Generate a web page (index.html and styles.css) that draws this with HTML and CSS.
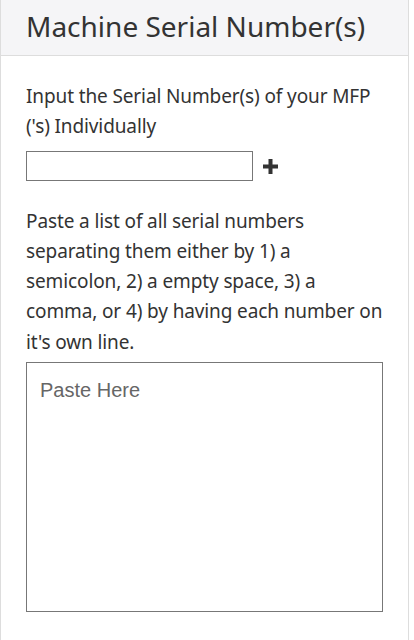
FILE: index.html
```html
<!DOCTYPE html>
<html lang="en">
<head>
  <meta charset="UTF-8">
  <title>Machine Serial Numbers</title>
  <link rel="stylesheet" href="styles.css">
</head>
<body>

<div class="panel">
  <div class="panel-heading">Machine Serial Number(s)</div>
  <div class="panel-body">
    <p class="hint">Input the Serial Number(s) of your MFP ('s) Individually</p>
    <div class="serial-row">
      <input type="text" class="serial-input">
      <button class="add-btn" title="Add">
        <svg width="15" height="15" viewBox="0 0 15 15"><path d="M5.5 0h4v5.5H15v4H9.5V15h-4V9.5H0v-4h5.5z" fill="#333"/></svg>
      </button>
    </div>
    <p class="hint paste-hint">Paste a list of all serial numbers separating them either by 1) a semicolon, 2) a empty space, 3) a comma, or 4) by having each number on it's own line.</p>
    <textarea class="paste-box" placeholder="Paste Here"></textarea>
  </div>
</div>

</body>
</html>
```

FILE: styles.css
```css
body {
  margin: 0;
  font-family: "Noto Sans", "Open Sans", sans-serif;
  color: #333;
  background: #fff;
}

.panel {
  width: 409px;
  height: 640px;
  box-sizing: border-box;
  border-left: 1px solid #ddd;
  border-right: 1px solid #ddd;
}

.panel-heading {
  height: 56px;
  box-sizing: border-box;
  padding: 0 25px;
  background-color: #f5f5f7;
  border-bottom: 1px solid #ddd;
  font-size: 28px;
  line-height: 52px;
  color: #333;
}

.panel-body {
  padding: 25px 25px 0;
}

.hint {
  margin: 0;
  font-size: 19px;
  letter-spacing: -0.12px;
  line-height: 30.3px;
}

.serial-row {
  display: flex;
  align-items: center;
  margin-top: 9px;
}

.serial-input {
  width: 227px;
  height: 30px;
  box-sizing: border-box;
  border: 1px solid #777;
  padding: 2px 6px;
  margin: 0;
  font-size: 16px;
}

.add-btn {
  border: none;
  background: none;
  padding: 0;
  margin-left: 10px;
  margin-top: 2px;
  cursor: pointer;
  display: flex;
}

.paste-hint {
  margin-top: 25px;
}

.paste-box {
  display: block;
  width: 357px;
  height: 250px;
  box-sizing: border-box;
  margin-top: 5px;
  border: 1px solid #777;
  padding: 16px 13px;
  font-family: "Liberation Sans", Arial, sans-serif;
  font-size: 20px;
  resize: none;
}

.paste-box::placeholder {
  color: #666;
}
```
